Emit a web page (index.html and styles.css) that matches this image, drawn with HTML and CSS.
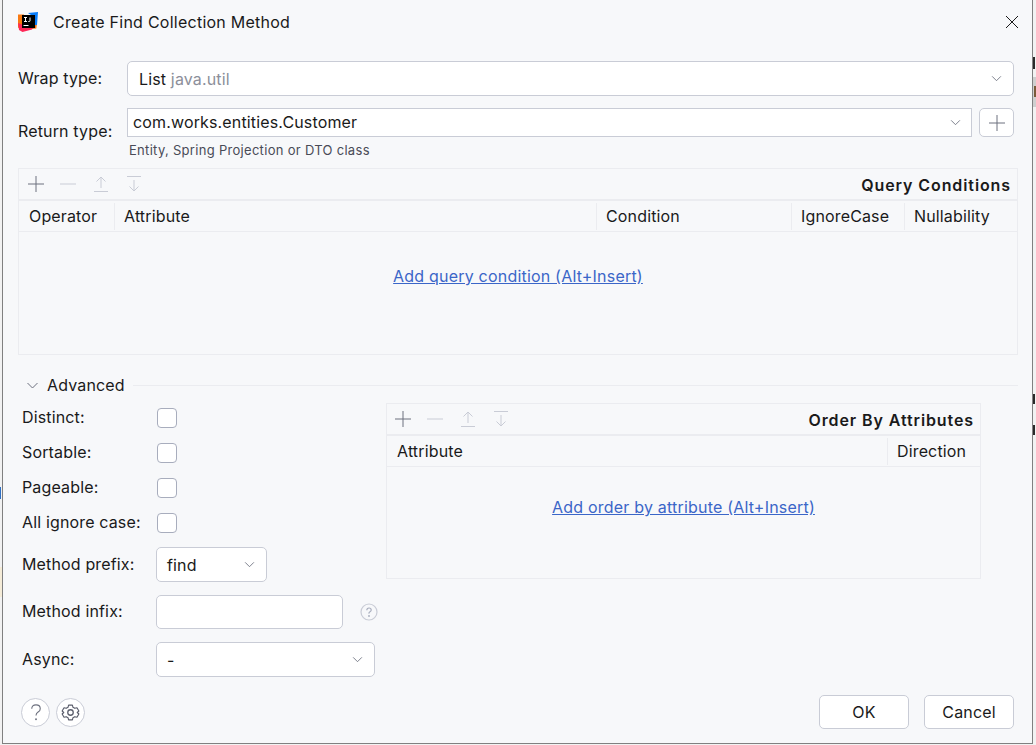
FILE: index.html
```html
<!DOCTYPE html>
<html lang="en">
<head>
    <meta charset="UTF-8">
    <meta name="viewport" content="width=device-width, initial-scale=1.0">
    <title>Create Find Collection Method</title>
    <link rel="stylesheet" href="styles.css">
</head>
<body>
    <!-- bits of the editor window behind the dialog -->
    <div class="behind behind-left">
        <span class="mark-blue"></span>
        <span class="mark-yellow"></span>
    </div>
    <div class="behind behind-right">
        <span class="sliver sliver-t"></span>
        <span class="mark-band"></span>
        <span class="mark-brown"></span>
        <span class="sliver sliver-e"></span>
        <span class="sliver sliver-c"></span>
    </div>

    <div class="dialog">
        <div class="title-bar">
            <svg class="app-icon" width="20" height="20" viewBox="0 0 20 20">
                <path d="M0 2.500h6v10l-3 5-3-2z" fill="#f97a12"/>
                <path d="M10 1l10-1-1 13-6 1V3z" fill="#087cfa"/>
                <path d="M14 13h4.800l-.5 3.500-4.300.5z" fill="#f97a12"/>
                <path d="M0 11l8 3 7 2-1 1.500-9.500 2.500L1 18z" fill="#fe2857"/>
                <rect x="4" y="3" width="13" height="13" fill="#000"/>
                <rect x="5.500" y="13" width="5" height="1" fill="#fff"/>
                <path d="M6 5.500h3M7.500 5.500v4M6 9.500h3M12 5.500v3.300q0 .7-.8.7h-.9" stroke="#fff" stroke-width="1" fill="none"/>
            </svg>
            <span class="title">Create Find Collection Method</span>
            <svg class="close" width="14" height="14" viewBox="0 0 14 14">
                <path d="M1 1l12 12M13 1L1 13" stroke="#1a1a1a" stroke-width="1" fill="none"/>
            </svg>
        </div>

        <div class="form-row wrap-row">
            <label class="row-label">Wrap type:</label>
            <div class="combo combo-wide">
                <span>List <span class="muted">java.util</span></span>
                <svg class="chevron" width="11" height="7" viewBox="0 0 12 8"><path d="M1 1.500l5 5 5-5" stroke="#6c707e" fill="none"/></svg>
            </div>
        </div>

        <div class="form-row return-row">
            <label class="row-label return-label">Return type:</label>
            <div class="return-field">
                <div class="return-input">
                    <div class="text-combo">
                        <span>com.works.entities.Customer</span>
                        <svg class="chevron" width="11" height="7" viewBox="0 0 12 8"><path d="M1 1.500l5 5 5-5" stroke="#6c707e" fill="none"/></svg>
                    </div>
                    <div class="plus-button">
                        <svg width="18" height="18" viewBox="0 0 18 18"><path d="M9 1v16M1 9h16" stroke="#6c707e" fill="none"/></svg>
                    </div>
                </div>
                <div class="hint">Entity, Spring Projection or DTO class</div>
            </div>
        </div>

        <div class="table-panel query-panel">
            <div class="panel-toolbar">
                <div class="tools">
                    <svg width="18" height="18" viewBox="0 0 18 18"><path d="M9 1v16M1 9h16" stroke="#6c707e" fill="none"/></svg>
                    <svg width="18" height="18" viewBox="0 0 18 18"><path d="M1 9h16" stroke="#c9ccd6" fill="none"/></svg>
                    <svg width="18" height="18" viewBox="0 0 18 18"><path d="M2 16.500h14M9 13V2M4.500 6.500L9 2l4.500 4.500" stroke="#c9ccd6" fill="none"/></svg>
                    <svg width="18" height="18" viewBox="0 0 18 18"><path d="M2 1.500h14M9 5v11M4.500 11.500L9 16l4.500-4.500" stroke="#c9ccd6" fill="none"/></svg>
                </div>
                <span class="panel-title">Query Conditions</span>
            </div>
            <div class="table-head query-head">
                <span>Operator</span>
                <span>Attribute</span>
                <span>Condition</span>
                <span>IgnoreCase</span>
                <span>Nullability</span>
            </div>
            <div class="table-empty query-empty">
                <a href="#">Add query condition (Alt+Insert)</a>
            </div>
        </div>

        <div class="section-head">
            <svg width="11" height="7" viewBox="0 0 11 7"><path d="M.5 1l5 5 5-5" stroke="#6c707e" fill="none"/></svg>
            <span>Advanced</span>
            <div class="section-line"></div>
        </div>

        <div class="advanced">
            <div class="options">
                <div class="check-row"><label>Distinct:</label><span class="checkbox"></span></div>
                <div class="check-row"><label>Sortable:</label><span class="checkbox"></span></div>
                <div class="check-row"><label>Pageable:</label><span class="checkbox"></span></div>
                <div class="check-row"><label>All ignore case:</label><span class="checkbox"></span></div>
                <div class="field-row prefix-row">
                    <label>Method prefix:</label>
                    <div class="combo combo-prefix">
                        <span>find</span>
                        <svg class="chevron" width="11" height="7" viewBox="0 0 12 8"><path d="M1 1.500l5 5 5-5" stroke="#6c707e" fill="none"/></svg>
                    </div>
                </div>
                <div class="field-row infix-row">
                    <label>Method infix:</label>
                    <input class="infix-input" type="text">
                    <svg class="help-small" width="18" height="18" viewBox="0 0 18 18">
                        <circle cx="9" cy="9" r="8" stroke="#c9ccd6" stroke-width="1.200" fill="none"/>
                        <path d="M6.800 7.200q0-2.200 2.200-2.200t2.200 2q0 1.200-1.200 1.800T9 10.600" stroke="#a8adbd" stroke-width="1.200" fill="none"/>
                        <circle cx="9" cy="13" r=".9" fill="#a8adbd"/>
                    </svg>
                </div>
                <div class="field-row async-row">
                    <label>Async:</label>
                    <div class="combo combo-async">
                        <span>-</span>
                        <svg class="chevron" width="11" height="7" viewBox="0 0 12 8"><path d="M1 1.500l5 5 5-5" stroke="#6c707e" fill="none"/></svg>
                    </div>
                </div>
            </div>

            <div class="table-panel order-panel">
                <div class="panel-toolbar">
                    <div class="tools">
                        <svg width="18" height="18" viewBox="0 0 18 18"><path d="M9 1v16M1 9h16" stroke="#6c707e" fill="none"/></svg>
                        <svg width="18" height="18" viewBox="0 0 18 18"><path d="M1 9h16" stroke="#c9ccd6" fill="none"/></svg>
                        <svg width="18" height="18" viewBox="0 0 18 18"><path d="M2 16.500h14M9 13V2M4.500 6.500L9 2l4.500 4.500" stroke="#c9ccd6" fill="none"/></svg>
                        <svg width="18" height="18" viewBox="0 0 18 18"><path d="M2 1.500h14M9 5v11M4.500 11.500L9 16l4.500-4.500" stroke="#c9ccd6" fill="none"/></svg>
                    </div>
                    <span class="panel-title">Order By Attributes</span>
                </div>
                <div class="table-head order-head">
                    <span>Attribute</span>
                    <span>Direction</span>
                </div>
                <div class="table-empty order-empty">
                    <a href="#">Add order by attribute (Alt+Insert)</a>
                </div>
            </div>
        </div>

        <div class="footer">
            <div class="round-buttons">
                <div class="round-button">
                    <svg width="12" height="17" viewBox="0 0 13 20">
                        <path d="M1.500 5.500Q1.500 1 6.500 1t5 4.500q0 2.500-2.500 4T6.500 13.500" stroke="#6c707e" stroke-width="1.300" fill="none"/>
                        <circle cx="6.500" cy="18" r="1.100" fill="#6c707e"/>
                    </svg>
                </div>
                <div class="round-button">
                    <svg width="19" height="19" viewBox="0 0 18 18">
                        <path d="M7 1.200h4l.6 2.300 1.900 1.100 2.300-.6 2 3.400L16.100 9l1.700 1.600-2 3.400-2.300-.6-1.900 1.100-.6 2.300H7l-.6-2.300-1.900-1.100-2.300.6-2-3.400L1.900 9 .2 7.400l2-3.400 2.300.6 1.900-1.100z" transform="translate(.9 .9) scale(.9)" stroke="#5a5d6b" stroke-width="1.200" fill="none" stroke-linejoin="round"/>
                        <circle cx="9" cy="9" r="2.600" stroke="#5a5d6b" stroke-width="1.200" fill="none"/>
                    </svg>
                </div>
            </div>
            <div class="footer-actions">
                <button type="button">OK</button>
                <button type="button">Cancel</button>
            </div>
        </div>
    </div>
</body>
</html>
```

FILE: styles.css
```css
* {
    box-sizing: border-box;
}
html, body {
    margin: 0;
    height: 745px;
    overflow: hidden;
}
body {
    font-family: Inter, "Liberation Sans", sans-serif;
    font-size: 16px;
    letter-spacing: 0.15px;
    color: #1a1a1a;
    background-color: #f2f2f2;
    padding: 0 3px 1px 2px;
}
.dialog {
    height: 744px;
    padding: 0 18px 0 15px;
    background: #f7f8fa;
    border-left: 1px solid #808080;
    border-right: 1px solid #808080;
    border-bottom: 1px solid #808080;
}

/* window behind */
.behind {
    position: absolute;
    top: 0;
    height: 745px;
    overflow: hidden;
}
.behind-left {
    left: 0;
    width: 2px;
}
.behind-right {
    left: 1033px;
    width: 3px;
}
.behind span {
    position: absolute;
    left: 0;
}
.mark-blue {
    top: 487px;
    width: 1px;
    height: 12px;
    background: #2f6fc4;
}
.mark-yellow {
    top: 567px;
    width: 2px;
    height: 30px;
    background: #f5ecd8;
}
.mark-band {
    top: 77px;
    width: 3px;
    height: 30px;
    background: #cfcfcf;
}
.behind .mark-brown {
    top: 86px;
    left: 1px;
    width: 2px;
    height: 11px;
    background: #7a5a3a;
}
.sliver {
    width: 2px;
    background: #2a2a2a;
}
.sliver-t {
    top: 57px;
    height: 12px;
}
.sliver-e {
    top: 394px;
    height: 10px;
}
.sliver-c {
    top: 425px;
    height: 10px;
}

/* title */
.title-bar {
    display: flex;
    align-items: center;
    height: 44px;
}
.app-icon {
    flex: none;
}
.title {
    margin-left: 15px;
    letter-spacing: 0.25px;
    flex: 1;
}
.close {
    margin-right: -5px;
}

/* top form */
.form-row {
    display: flex;
}
.row-label {
    width: 109px;
    flex: none;
}
.wrap-row {
    margin-top: 17px;
    align-items: center;
    height: 35px;
}
.wrap-row .row-label {
    margin-bottom: 2px;
}
.return-row {
    margin-top: 12px;
}
.return-label {
    padding-top: 13px;
}
.return-field {
    flex: 1;
}
.return-input {
    display: flex;
    gap: 7px;
}
.combo {
    display: flex;
    align-items: center;
    justify-content: space-between;
    height: 35px;
    padding: 0 11px;
    background: #fff;
    border: 1px solid #c9ccd6;
    border-radius: 5px;
}
.combo-wide {
    flex: 1;
}
.muted {
    color: #8c8f9a;
}
.text-combo {
    flex: 1;
    display: flex;
    align-items: center;
    justify-content: space-between;
    height: 29px;
    padding: 0 10px 0 5px;
    background: #fff;
    border: 1px solid #c9ccd6;
}
.text-combo span {
    margin-bottom: 2px;
}
.plus-button {
    width: 35px;
    height: 29px;
    display: flex;
    align-items: center;
    justify-content: center;
    background: #fff;
    border: 1px solid #c9ccd6;
    border-radius: 5px;
}
.hint {
    margin: 5px 0 8px 2px;
    height: 18px;
    font-size: 13px;
    letter-spacing: 0.3px;
    color: #494b57;
}

/* tables */
.table-panel {
    border: 1px solid #ebecf0;
}
.panel-toolbar {
    display: flex;
    align-items: center;
    justify-content: space-between;
    height: 32px;
    padding: 0 6px 0 8px;
    border-bottom: 2px solid #ebecf0;
}
.tools {
    display: flex;
    gap: 14px;
}
.tools svg:nth-child(n+3) {
    margin-left: 1px;
}
.panel-title {
    padding-top: 2px;
    font-weight: 600;
    letter-spacing: 0.9px;
}
.table-head {
    display: grid;
    align-items: center;
    height: 31px;
    border-bottom: 1px solid #ebecf0;
}
.table-head span {
    padding-left: 9px;
    height: 27px;
    line-height: 27px;
    border-left: 1px solid #ebecf0;
}
.table-head span:first-child {
    padding-left: 10px;
    border-left: none;
}
.query-panel {
    margin-right: -4px;
    height: 187px;
}
.query-head {
    grid-template-columns: 95px 482px 195px 113px 1fr;
}
.table-empty {
    display: flex;
    justify-content: center;
}
.table-empty a {
    color: #3b66c8;
    letter-spacing: 0.2px;
}
.query-empty {
    padding-top: 34px;
}

/* advanced */
.section-head {
    display: flex;
    align-items: center;
    height: 20px;
    margin: 20px -4px 0 9px;
}
.section-head span {
    margin-left: 9px;
}
.section-line {
    flex: 1;
    margin-left: 8px;
    border-top: 1px solid #ebecf0;
}
.advanced {
    display: flex;
    justify-content: space-between;
    margin-top: 5px;
    padding-left: 4px;
    padding-right: 33px;
}
.options {
    width: 356px;
}
.check-row {
    display: flex;
    align-items: center;
    height: 35px;
}
.check-row label, .field-row label {
    width: 134px;
    margin-bottom: 2px;
    flex: none;
}
.checkbox {
    width: 20px;
    height: 20px;
    margin-left: 1px;
    background: #fff;
    border: 1px solid #a8adbd;
    border-radius: 4px;
}
.field-row {
    display: flex;
    align-items: center;
}
.prefix-row {
    margin-top: 7px;
}
.infix-row {
    margin-top: 13px;
}
.async-row {
    margin-top: 13px;
}
.combo-prefix {
    width: 111px;
    padding-left: 10px;
}
.combo-async {
    width: 219px;
    padding-left: 10px;
}
.infix-input {
    width: 187px;
    height: 34px;
    background: #fff;
    border: 1px solid #c9ccd6;
    border-radius: 5px;
    outline: none;
}
.help-small {
    margin-left: 17px;
}
.order-panel {
    width: 595px;
    height: 176px;
    margin-top: 3px;
}
.order-panel .panel-toolbar {
    padding-left: 7px;
}
.order-head {
    grid-template-columns: 1fr 93px;
}
.order-empty {
    padding-top: 30px;
}

/* footer */
.footer {
    display: flex;
    justify-content: space-between;
    align-items: center;
    margin-top: 18px;
}
.round-buttons {
    display: flex;
    gap: 6px;
    margin-left: 3px;
}
.round-button {
    width: 29px;
    height: 29px;
    display: flex;
    align-items: center;
    justify-content: center;
    background: #fff;
    border: 1px solid #c9ccd6;
    border-radius: 50%;
}
.footer-actions {
    display: flex;
    gap: 15px;
}
.footer-actions button {
    width: 90px;
    height: 34px;
    font-family: inherit;
    font-size: 16px;
    letter-spacing: inherit;
    color: #1a1a1a;
    background: #fff;
    border: 1px solid #c9ccd6;
    border-radius: 5px;
}
```
